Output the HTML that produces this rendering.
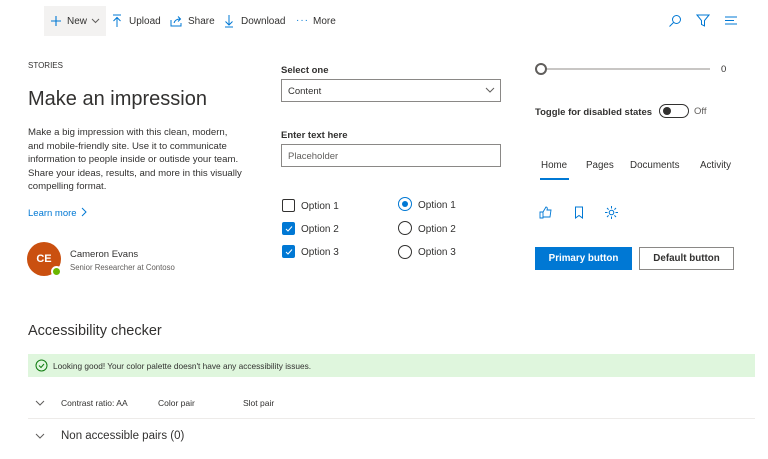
<!DOCTYPE html>
<html><head><style>
*{margin:0;padding:0;box-sizing:border-box}
body{width:768px;height:459px;background:#fff;font-family:"Liberation Sans",sans-serif;color:#323130;position:relative;overflow:hidden;font-size:10px}
.a{position:absolute;white-space:nowrap}
.blue{color:#0078d4}
.cb{position:absolute;width:13px;height:13px;border:1px solid #323130;border-radius:2px}
.cb.on{background:#0078d4;border-color:#0078d4}
.rd{position:absolute;width:14px;height:14px;border:1px solid #323130;border-radius:50%}
svg{position:absolute}
</style></head><body>
<div class="a" style="left:44px;top:6px;width:62px;height:30px;background:#f3f2f1"></div>
<svg style="left:50px;top:15px" width="12" height="12" viewBox="0 0 12 12"><path d="M6 1v10M1 6h10" stroke="#0078d4" stroke-width="1.1"/></svg>
<div class="a" style="left:67px;top:16px">New</div>
<svg style="left:91px;top:18px" width="9" height="6" viewBox="0 0 9 6"><path d="M1 1l3.5 3.5L8 1" stroke="#605e5c" fill="none"/></svg>
<svg style="left:112px;top:14px" width="10" height="14" viewBox="0 0 10 14"><path d="M1 1h8M5 3v10M1.5 7L5 3.5 8.5 7" stroke="#0078d4" fill="none"/></svg>
<div class="a" style="left:129px;top:16px">Upload</div>
<svg style="left:170px;top:15px" width="13" height="12" viewBox="0 0 13 12"><path d="M1 5v6h10V8M4 8c1-3 3-4 6-4M8 1.5l2.5 2.5L8 6.5" stroke="#0078d4" fill="none"/></svg>
<div class="a" style="left:188px;top:16px">Share</div>
<svg style="left:224px;top:14px" width="10" height="14" viewBox="0 0 10 14"><path d="M5 1v10M1.5 7.5L5 11l3.5-3.5M1 13h8" stroke="#0078d4" fill="none"/></svg>
<div class="a" style="left:241px;top:16px">Download</div>
<div class="a" style="left:296px;top:15px;color:#0078d4;letter-spacing:1px">···</div>
<div class="a" style="left:313px;top:16px">More</div>
<svg style="left:668px;top:14px" width="14" height="14" viewBox="0 0 14 14"><circle cx="8.5" cy="5.5" r="4" stroke="#0078d4" fill="none"/><path d="M5.5 8.5L1.5 12.5" stroke="#0078d4"/></svg>
<svg style="left:696px;top:14px" width="14" height="13" viewBox="0 0 14 13"><path d="M1 1h12L8.5 6.5V12l-3-1.5V6.5z" stroke="#0078d4" fill="none"/></svg>
<svg style="left:724px;top:16px" width="14" height="9" viewBox="0 0 14 9"><path d="M1 1h12M1 4.5h9M1 8h12" stroke="#0078d4"/></svg>

<div class="a" style="left:28px;top:61px;font-size:8px">STORIES</div>
<div class="a" style="left:28px;top:88px;font-size:20px">Make an impression</div>
<div class="a" style="left:28px;top:126px;font-size:9.6px;line-height:13.5px;white-space:normal;width:215px">Make a big impression with this clean, modern, and mobile-friendly site. Use it to communicate information to people inside or outisde your team. Share your ideas, results, and more in this visually compelling format.</div>
<div class="a blue" style="left:28px;top:208px;font-size:9.5px">Learn more</div>
<svg style="left:81px;top:207px" width="6" height="10" viewBox="0 0 6 10"><path d="M1 1l4 4-4 4" stroke="#0078d4" fill="none"/></svg>
<div class="a" style="left:27px;top:242px;width:34px;height:34px;border-radius:50%;background:#ca5010;color:#fff;font-weight:bold;font-size:11px;line-height:34px;text-align:center">CE</div>
<div class="a" style="left:51px;top:266px;width:11px;height:11px;border-radius:50%;background:#6bb700;border:2px solid #fff"></div>
<div class="a" style="left:70px;top:249px;font-size:9.5px">Cameron Evans</div>
<div class="a" style="left:70px;top:263px;font-size:7.8px;color:#605e5c">Senior Researcher at Contoso</div>

<div class="a" style="left:281px;top:65px;font-size:9.5px;font-weight:bold;color:#323130">Select one</div>
<div class="a" style="left:281px;top:79px;width:220px;height:23px;border:1px solid #8a8886"></div>
<div class="a" style="left:288px;top:86px;font-size:9.5px">Content</div>
<svg style="left:485px;top:87px" width="10" height="6" viewBox="0 0 10 6"><path d="M1 1l4 4 4-4" stroke="#605e5c" fill="none"/></svg>
<div class="a" style="left:281px;top:130px;font-size:9.5px;font-weight:bold">Enter text here</div>
<div class="a" style="left:281px;top:144px;width:220px;height:23px;border:1px solid #8a8886"></div>
<div class="a" style="left:288px;top:151px;font-size:9.5px;color:#605e5c">Placeholder</div>

<div class="cb" style="left:282px;top:199px"></div>
<div class="a" style="left:301px;top:201px">Option 1</div>
<div class="cb on" style="left:282px;top:222px"></div>
<svg style="left:284px;top:224px" width="10" height="10" viewBox="0 0 10 10"><path d="M2 5l2 2 4-4.5" stroke="#fff" fill="none"/></svg>
<div class="a" style="left:301px;top:224px">Option 2</div>
<div class="cb on" style="left:282px;top:245px"></div>
<svg style="left:284px;top:247px" width="10" height="10" viewBox="0 0 10 10"><path d="M2 5l2 2 4-4.5" stroke="#fff" fill="none"/></svg>
<div class="a" style="left:301px;top:247px">Option 3</div>
<div class="rd" style="left:398px;top:197px;border-color:#0078d4"></div>
<div class="a" style="left:402px;top:201px;width:6px;height:6px;border-radius:50%;background:#0078d4"></div>
<div class="a" style="left:418px;top:200px">Option 1</div>
<div class="rd" style="left:398px;top:221px"></div>
<div class="a" style="left:418px;top:224px">Option 2</div>
<div class="rd" style="left:398px;top:245px"></div>
<div class="a" style="left:418px;top:247px">Option 3</div>

<div class="a" style="left:540px;top:68px;width:170px;height:2px;background:#c8c6c4"></div>
<div class="a" style="left:535px;top:63px;width:12px;height:12px;border-radius:50%;border:2px solid #605e5c;background:#fff"></div>
<div class="a" style="left:721px;top:64px;font-size:9.5px">0</div>
<div class="a" style="left:535px;top:107px;font-size:9.5px;font-weight:bold">Toggle for disabled states</div>
<div class="a" style="left:659px;top:104px;width:30px;height:14px;border:1px solid #323130;border-radius:7px"></div>
<div class="a" style="left:663px;top:107px;width:8px;height:8px;border-radius:50%;background:#323130"></div>
<div class="a" style="left:694px;top:106px;font-size:9.5px;color:#605e5c">Off</div>

<div class="a" style="left:541px;top:160px;font-size:9.8px">Home</div>
<div class="a" style="left:540px;top:178px;width:29px;height:2px;background:#0078d4"></div>
<div class="a" style="left:586px;top:160px;font-size:9.8px">Pages</div>
<div class="a" style="left:630px;top:160px;font-size:9.8px">Documents</div>
<div class="a" style="left:700px;top:160px;font-size:9.8px">Activity</div>
<svg style="left:539px;top:206px" width="14" height="13" viewBox="0 0 14 13"><path d="M1 6h3v6H1zM4 6l3-5c1.5 0 1.5 1.5 1 3h4l-1 7H4" stroke="#0078d4" fill="none" stroke-width=".9"/></svg>
<svg style="left:574px;top:206px" width="10" height="13" viewBox="0 0 10 13"><path d="M1.5 1h7v11L5 9.5 1.5 12z" stroke="#0078d4" fill="none"/></svg>
<svg style="left:605px;top:206px" width="13" height="13" viewBox="0 0 13 13"><circle cx="6.5" cy="6.5" r="2.3" stroke="#0078d4" fill="none"/><path d="M6.5 0v2.5M6.5 10.5V13M0 6.5h2.5M10.5 6.5H13M2 2l1.6 1.6M9.4 9.4L11 11M2 11l1.6-1.6M9.4 3.6L11 2" stroke="#0078d4"/></svg>
<div class="a" style="left:535px;top:247px;width:97px;height:23px;background:#0078d4;color:#fff;font-weight:bold;font-size:9.8px;line-height:24px;text-align:center">Primary button</div>
<div class="a" style="left:639px;top:247px;width:95px;height:23px;border:1px solid #8a8886;font-weight:bold;font-size:9.8px;line-height:22px;text-align:center">Default button</div>

<div class="a" style="left:28px;top:323px;font-size:14.5px">Accessibility checker</div>
<div class="a" style="left:28px;top:354px;width:727px;height:23px;background:#dff6dd"></div>
<svg style="left:35px;top:359px" width="13" height="13" viewBox="0 0 13 13"><circle cx="6.5" cy="6.5" r="5.5" stroke="#107c10" fill="none"/><path d="M4 6.5l2 2 3-3.5" stroke="#107c10" fill="none"/></svg>
<div class="a" style="left:53px;top:361px;font-size:8.3px">Looking good! Your color palette doesn't have any accessibility issues.</div>
<svg style="left:35px;top:400px" width="10" height="6" viewBox="0 0 10 6"><path d="M1 1l4 4 4-4" stroke="#605e5c" fill="none"/></svg>
<div class="a" style="left:61px;top:398px;font-size:8.5px">Contrast ratio: AA</div>
<div class="a" style="left:158px;top:398px;font-size:8.5px">Color pair</div>
<div class="a" style="left:243px;top:398px;font-size:8.5px">Slot pair</div>
<div class="a" style="left:28px;top:418px;width:727px;height:1px;background:#edebe9"></div>
<svg style="left:35px;top:433px" width="10" height="6" viewBox="0 0 10 6"><path d="M1 1l4 4 4-4" stroke="#605e5c" fill="none"/></svg>
<div class="a" style="left:61px;top:430px;font-size:11.5px">Non accessible pairs (0)</div>
</body></html>
